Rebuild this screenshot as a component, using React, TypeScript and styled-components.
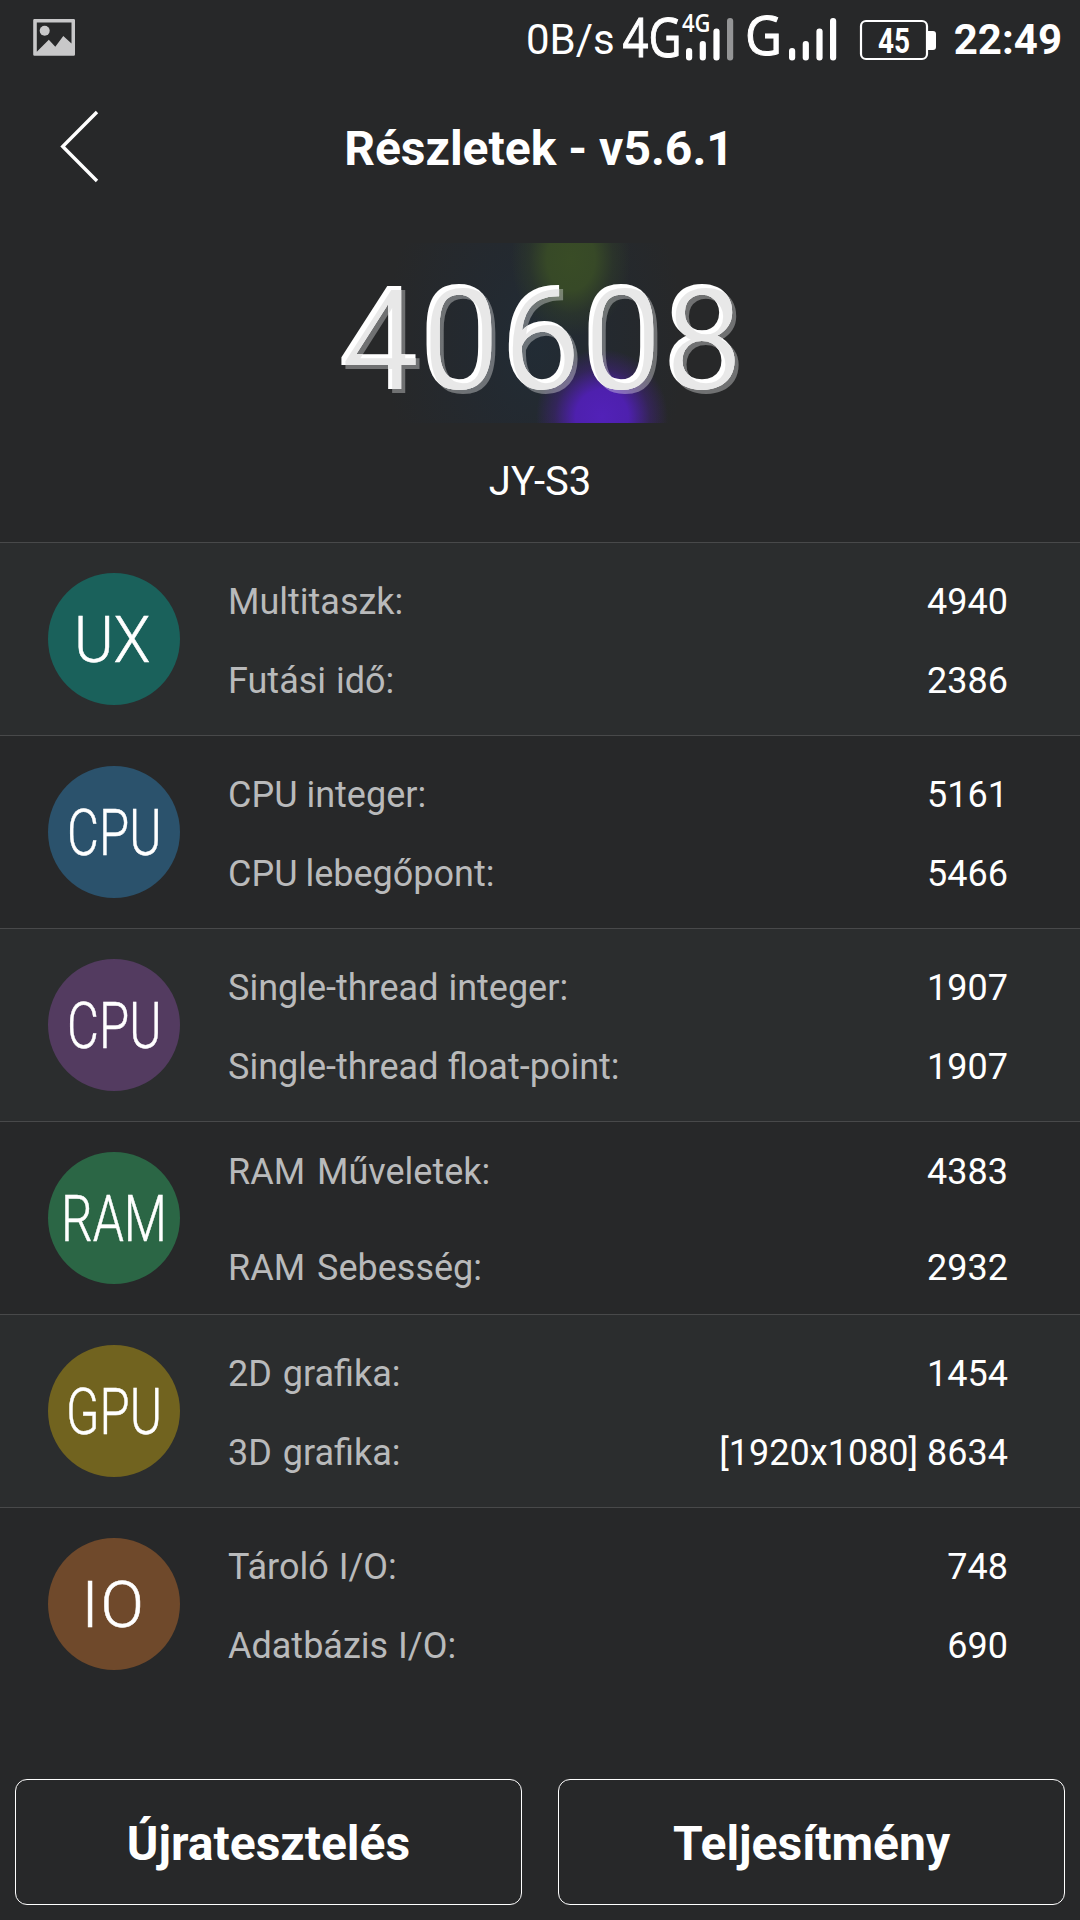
import React from "react";
import styled, { createGlobalStyle } from "styled-components";

const GlobalStyle = createGlobalStyle`
  * { box-sizing: border-box; }
  body { margin: 0; background: #272829; }
`;

const Screen = styled.div`
  width: 1080px;
  height: 1920px;
  display: flex;
  flex-direction: column;
  overflow: hidden;
  background: #272829;
  color: #fff;
  font-family: Roboto, "Noto Sans", sans-serif;
`;

const StatusBar = styled.div`
  height: 75px;
  flex: none;
  display: flex;
  align-items: flex-start;
  padding: 0 18px 0 33px;
`;

const StatusRight = styled.div`
  margin-left: auto;
  display: flex;
  align-items: flex-start;
`;

const StatusText = styled.span<{ $bold?: boolean }>`
  font-size: 42px;
  line-height: 50px;
  padding-top: 15px;
  font-weight: ${(p) => (p.$bold ? 700 : 400)};
`;

const Glyph = styled.svg`
  display: block;
  flex: none;
  overflow: visible;
`;

const TitleBar = styled.header`
  height: 145px;
  flex: none;
  display: grid;
  grid-template-columns: 160px 1fr 160px;
  align-items: center;
`;

const BackButton = styled.button`
  border: 0;
  background: none;
  padding: 0 0 0 56px;
  height: 80px;
  cursor: pointer;
`;

const Title = styled.h1`
  margin: 0;
  padding: 2px 2px 0 0;
  text-align: center;
  font-size: 48px;
  line-height: 56px;
  font-weight: 700;
  white-space: nowrap;
`;

const Hero = styled.section`
  height: 322px;
  flex: none;
  display: flex;
  flex-direction: column;
  align-items: center;
  padding-top: 23px;
`;

const Glow = styled.div`
  width: 480px;
  height: 180px;
  display: flex;
  justify-content: center;
  align-items: flex-start;
  padding-top: 13px;
  background:
    radial-gradient(ellipse 60px 78px at 271px 16px, #394c26 0%, #374927 40%, rgba(48, 62, 40, 0.5) 70%, rgba(39, 40, 41, 0) 100%),
    radial-gradient(ellipse 66px 68px at 302px 174px, #5221b8 0%, #4e20ae 40%, rgba(66, 33, 130, 0.5) 72%, rgba(39, 40, 41, 0) 100%),
    radial-gradient(ellipse 150px 220px at 235px 100px, #222c35 0%, rgba(34, 42, 51, 0.7) 40%, rgba(39, 40, 41, 0) 100%);
`;

const Score = styled.div`
  font-size: 144px;
  line-height: 168px;
  filter: url(#bevel);
`;

const Device = styled.div`
  margin-top: 36px;
  font-size: 40px;
  line-height: 46px;
`;

const List = styled.main`
  flex: none;
`;

const Row = styled.section<{ $alt: boolean }>`
  height: 193px;
  display: flex;
  align-items: center;
  padding: 0 72px 0 48px;
  border-top: 1px solid #48494a;
  background: ${(p) => (p.$alt ? "#2b2d2e" : "#272829")};
`;

const Badge = styled.div<{ $color: string }>`
  width: 132px;
  height: 132px;
  flex: none;
  border-radius: 50%;
  background: ${(p) => p.$color};
`;

const Metrics = styled.div<{ $wide?: boolean }>`
  flex: 1;
  margin-left: 48px;
  padding-top: ${(p) => (p.$wide ? 4 : 5)}px;
  display: flex;
  flex-direction: column;
  gap: ${(p) => (p.$wide ? 54 : 37)}px;
`;

const Metric = styled.div`
  display: flex;
  justify-content: space-between;
  font-size: 36px;
  line-height: 42px;
  white-space: nowrap;
`;

const Label = styled.span<{ $gap?: number }>`
  color: #b9babb;
  word-spacing: ${(p) => p.$gap ?? 0}px;
`;

const Value = styled.span`
  color: #fff;
`;

const Footer = styled.footer`
  margin-top: auto;
  display: grid;
  grid-template-columns: 1fr 1fr;
  gap: 36px;
  padding: 0 15px 15px;
`;

const Action = styled.button`
  height: 126px;
  padding: 3px 0 0;
  border: 1px solid #fff;
  border-radius: 12px;
  background: none;
  color: #fff;
  font: 700 48px/56px Roboto, "Noto Sans", sans-serif;
  cursor: pointer;
`;

type Item = { label: string; value: string; gap?: number };
type Group = { tag: string; x: number; w?: number; color: string; items: Item[]; wide?: boolean };

const groups: Group[] = [
  { tag: "UX", x: 26, w: 76.5, color: "#1a615b", items: [{ label: "Multitaszk:", value: "4940" }, { label: "Futási idő:", value: "2386", gap: 1 }] },
  { tag: "CPU", x: 19, w: 94.5, color: "#2b526c", items: [{ label: "CPU integer:", value: "5161" }, { label: "CPU lebegőpont:", value: "5466", gap: -1 }] },
  { tag: "CPU", x: 19, w: 94.5, color: "#533b60", items: [{ label: "Single-thread integer:", value: "1907", gap: 1 }, { label: "Single-thread float-point:", value: "1907" }] },
  { tag: "RAM", x: 13, w: 106, color: "#2b6645", wide: true, items: [{ label: "RAM Műveletek:", value: "4383", gap: 3 }, { label: "RAM Sebesség:", value: "2932", gap: 3 }] },
  { tag: "GPU", x: 18, w: 96, color: "#71631f", items: [{ label: "2D grafika:", value: "1454", gap: 2 }, { label: "3D grafika:", value: "[1920x1080] 8634", gap: 2 }] },
  { tag: "IO", x: 33.5, color: "#6f492b", items: [{ label: "Tároló I/O:", value: "748", gap: 1 }, { label: "Adatbázis I/O:", value: "690", gap: 1 }] },
];

const bars = [
  { x: 0, y: 48 },
  { x: 13.7, y: 41 },
  { x: 27.4, y: 28.5 },
  { x: 41, y: 18 },
];

function Bars({ x, dimLast }: { x: number; dimLast?: boolean }) {
  return (
    <g>
      {bars.map((b, i) => (
        <rect key={i} x={x + b.x} y={b.y} width={6.2} height={60.5 - b.y} rx={3} fill={dimLast && i === 3 ? "#949596" : "#fff"} />
      ))}
    </g>
  );
}

const netFont = '"Open Sans", "Noto Sans", sans-serif';

export default function App() {
  return (
    <Screen>
      <GlobalStyle />
      <svg width="0" height="0" style={{ position: "absolute" }}>
        <filter id="bevel" x="-5%" y="-5%" width="110%" height="110%" colorInterpolationFilters="sRGB">
          <feOffset in="SourceAlpha" dx="4.4" dy="4.4" result="moved" />
          <feFlood floodColor="#fff" floodOpacity="0.34" />
          <feComposite in2="moved" operator="in" result="shade" />
          <feFlood floodColor="#e8e8e8" />
          <feComposite in2="moved" operator="in" />
          <feComposite in2="SourceAlpha" operator="in" result="face" />
          <feMerge>
            <feMergeNode in="shade" />
            <feMergeNode in="SourceGraphic" />
            <feMergeNode in="face" />
          </feMerge>
        </filter>
      </svg>
      <StatusBar>
        <Glyph width="42" height="75" viewBox="33 0 42 75">
          <path
            fill="#c8c8c9"
            fillRule="evenodd"
            d="M34.5 19H73.7Q75 19 75 20.3V54.5Q75 55.8 73.7 55.8H34.5Q33.2 55.8 33.2 54.5V20.3Q33.2 19 34.5 19ZM36.8 22.5V51.8L48.8 39.8L55.3 46.8L63.3 36L71.5 43.5V22.5Z"
          />
          <circle cx="44.7" cy="30.7" r="5" fill="#c8c8c9" />
        </Glyph>
        <StatusRight>
          <StatusText>0B/s</StatusText>
          <Glyph width="339" height="75" viewBox="615 0 339 75">
            <g fill="#fff" stroke="#fff" strokeWidth="1" fontFamily={netFont}>
              <text x="622.5" y="57" fontSize="55" textLength="59" lengthAdjust="spacingAndGlyphs">4G</text>
              <text x="682" y="32" fontSize="26" fontWeight="600" strokeWidth="0" textLength="28.5" lengthAdjust="spacingAndGlyphs">4G</text>
              <text x="745" y="55" fontSize="54" textLength="37" lengthAdjust="spacingAndGlyphs">G</text>
            </g>
            <Bars x={686} dimLast />
            <Bars x={789} />
            <rect x="861" y="21" width="66" height="38" rx="5" fill="none" stroke="#fff" strokeWidth="2.2" />
            <path d="M928 31H933Q936 31 936 34V47Q936 50 933 50H928Z" fill="#fff" />
            <text x="878" y="53" fontSize="35" fontWeight="700" fill="#fff" textLength="32" lengthAdjust="spacingAndGlyphs">45</text>
          </Glyph>
          <StatusText $bold>22:49</StatusText>
        </StatusRight>
      </StatusBar>

      <TitleBar>
        <BackButton aria-label="Vissza">
          <Glyph width="48" height="76" viewBox="56 110 48 76">
            <path d="M97 112L62.7 146.5L97 181" fill="none" stroke="#fff" strokeWidth="3.4" />
          </Glyph>
        </BackButton>
        <Title>Részletek - v5.6.1</Title>
      </TitleBar>

      <Hero>
        <Glow>
          <Score>40608</Score>
        </Glow>
        <Device>JY-S3</Device>
      </Hero>

      <List>
        {groups.map((g, i) => (
          <Row key={i} $alt={i % 2 === 0}>
            <Badge $color={g.color}>
              <Glyph width="132" height="132">
                <text
                  x={g.x}
                  y="89"
                  fontSize="64"
                  fontWeight="300"
                  fill="#fff"
                  stroke="#fff"
                  strokeWidth="0.5"
                  textLength={g.w}
                  lengthAdjust={g.w ? "spacingAndGlyphs" : undefined}
                  letterSpacing={g.w ? undefined : 2}
                >
                  {g.tag}
                </text>
              </Glyph>
            </Badge>
            <Metrics $wide={g.wide}>
              {g.items.map((m) => (
                <Metric key={m.label}>
                  <Label $gap={m.gap}>{m.label}</Label>
                  <Value>{m.value}</Value>
                </Metric>
              ))}
            </Metrics>
          </Row>
        ))}
      </List>

      <Footer>
        <Action>Újratesztelés</Action>
        <Action>Teljesítmény</Action>
      </Footer>
    </Screen>
  );
}
